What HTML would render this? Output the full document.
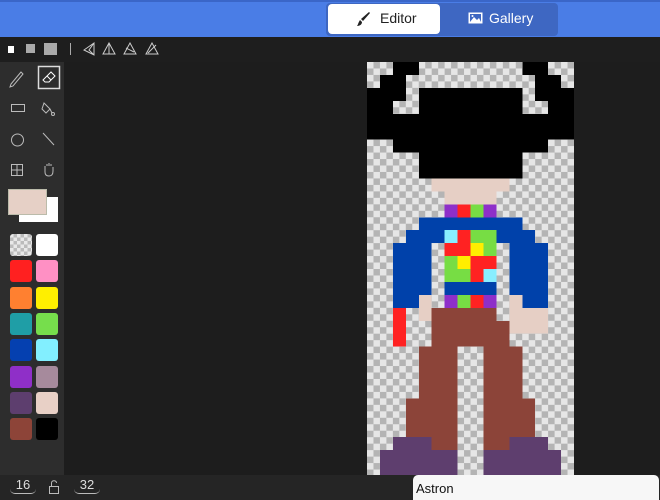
<!DOCTYPE html>
<html><head><meta charset="utf-8"><style>
*{margin:0;padding:0;box-sizing:border-box}
body{width:660px;height:500px;overflow:hidden;background:#1d1d1d;font-family:"Liberation Sans",sans-serif;position:relative}
.abs{position:absolute}
.sw{position:absolute;width:22px;height:22px;border-radius:3px}
</style></head><body>
<div class="abs" style="left:0;top:0;width:660px;height:37px;background:#4a7de6;border-top:2px solid #3a66c8"></div>
<div class="abs" style="left:326px;top:3px;width:232px;height:33px;background:#3e67c2;border-radius:4px"></div>
<div class="abs" style="left:328px;top:4px;width:112px;height:30px;background:#fff;border-radius:4px"></div>
<svg class="abs" style="left:355px;top:11px" width="16" height="16" viewBox="0 0 16 16"><path d="M14 1 L15 2 L8 10 L6 8 Z" fill="#222"/><path d="M5 9 L7 11 C7 14 4 15 2 15 C3 14 3 12 5 9Z" fill="#222"/></svg>
<div class="abs" style="left:380px;top:10px;font-size:14px;color:#222">Editor</div>
<svg class="abs" style="left:468px;top:12px" width="15" height="12" viewBox="0 0 15 12"><rect x="0.5" y="0.5" width="14" height="11" fill="#fff"/><rect x="2" y="2" width="11" height="8" fill="#3e67c2"/><path d="M2 10 L6 5 L9 8 L11 6 L13 10Z" fill="#fff"/><circle cx="4.5" cy="4" r="1" fill="#fff"/></svg>
<div class="abs" style="left:489px;top:10px;font-size:14px;color:#fff">Gallery</div>

<div class="abs" style="left:0;top:37px;width:660px;height:25px;background:#1e1e1e"></div>
<div class="abs" style="left:8px;top:46px;width:6px;height:7px;background:#fff"></div>
<div class="abs" style="left:26px;top:44px;width:9px;height:9px;background:#aaa"></div>
<div class="abs" style="left:44px;top:43px;width:13px;height:12px;background:#aaa"></div>
<div class="abs" style="left:70px;top:43px;width:1px;height:12px;background:#aaa"></div>
<svg class="abs" style="left:82px;top:42px" width="80" height="14" viewBox="0 0 80 14" fill="none" stroke="#ccc" stroke-width="1">
<path d="M12 1 L2 8 L12 13 Z M12 1 L7 8 L12 13"/>
<path d="M27 1 L21 12 L33 12 Z M27 1 V12"/>
<path d="M48 1 L42 12 L54 12 Z M44 6 L52 10"/>
<path d="M70 1 L64 12 L76 12 Z M74 3 L66 11"/>
</svg>

<div class="abs" style="left:0;top:62px;width:64px;height:413px;background:#2d2d2d"></div>
<svg class="abs" style="left:0;top:62px" width="64" height="120" viewBox="0 0 64 120" fill="none" stroke="#bbb" stroke-width="1">
<path d="M11 22 L21 10 L23 12 L13 24 L10 25 Z"/>
<rect x="38.5" y="4.5" width="21" height="22" stroke="#ddd" stroke-width="1.5"/>
<path d="M43 18 L51 10 L55 14 L49 20 L45 20 Z M47 14 L51 18" stroke="#fff"/>
<rect x="11.5" y="42.5" width="13" height="7"/>
<path d="M44 41 L50 47 L46 51 L42 47 Z M50 47 L52 51"/><circle cx="53" cy="52" r="1.5"/>
<circle cx="17.5" cy="78" r="6"/>
<path d="M43 71 L54 83"/>
<rect x="11.5" y="102.5" width="11" height="11"/><path d="M17 103 V113 M12 108 H22"/>
<path d="M45 104 V110 C45 113 47 114 49 114 C52 114 53 112 53 109 V105 M47 104 V102 M49 104 V101 M51 104 V102"/>
</svg>
<div class="abs" style="left:19px;top:197px;width:39px;height:25px;background:#fff"></div>
<div class="abs" style="left:8px;top:189px;width:39px;height:26px;background:#e6d0c6;border:1px solid #bba"></div>
<div class="sw" style="left:10px;top:234px;background:repeating-conic-gradient(#bbb 0 25%,#e8e8e8 0 50%) 0 0/7px 7px"></div>
<div class="sw" style="left:36px;top:234px;background:#fff"></div>
<div class="sw" style="left:10px;top:260px;background:#ff2020"></div>
<div class="sw" style="left:36px;top:260px;background:#ff90c4"></div>
<div class="sw" style="left:10px;top:287px;background:#ff8030"></div>
<div class="sw" style="left:36px;top:287px;background:#ffef00"></div>
<div class="sw" style="left:10px;top:313px;background:#1f9ea6"></div>
<div class="sw" style="left:36px;top:313px;background:#76de4c"></div>
<div class="sw" style="left:10px;top:339px;background:#0540b0"></div>
<div class="sw" style="left:36px;top:339px;background:#82efff"></div>
<div class="sw" style="left:10px;top:366px;background:#8f2fc8"></div>
<div class="sw" style="left:36px;top:366px;background:#a68a9c"></div>
<div class="sw" style="left:10px;top:392px;background:#5d3e6e"></div>
<div class="sw" style="left:36px;top:392px;background:#e8d0c6"></div>
<div class="sw" style="left:10px;top:418px;background:#8d4438"></div>
<div class="sw" style="left:36px;top:418px;background:#000"></div>

<svg class="abs" style="left:367px;top:62px" width="207" height="414" viewBox="0 0 16 32" shape-rendering="crispEdges">
<defs><pattern id="ck" width="1" height="1" patternUnits="userSpaceOnUse"><rect width="1" height="1" fill="#e6e6e6"/><rect x="0.5" width="0.5" height="0.5" fill="#b4b4b4"/><rect y="0.5" width="0.5" height="0.5" fill="#b4b4b4"/></pattern></defs>
<rect width="16" height="32" fill="url(#ck)"/>
<g fill="#000">
<rect x="2" y="0" width="2" height="1"/><rect x="12" y="0" width="2" height="1"/>
<rect x="1" y="1" width="2" height="1"/><rect x="13" y="1" width="2" height="1"/>
<rect x="0" y="2" width="3" height="1"/><rect x="4" y="2" width="8" height="1"/><rect x="13" y="2" width="3" height="1"/>
<rect x="0" y="3" width="2" height="1"/><rect x="4" y="3" width="8" height="1"/><rect x="14" y="3" width="2" height="1"/>
<rect x="0" y="4" width="16" height="2"/>
<rect x="2" y="6" width="12" height="1"/>
<rect x="4" y="7" width="8" height="2"/>
</g>
<g fill="#e6cfc5">
<rect x="5" y="9" width="6" height="1"/><rect x="6" y="10" width="4" height="1"/>
<rect x="4" y="18" width="1" height="2"/><rect x="11" y="18" width="1" height="1"/><rect x="11" y="19" width="3" height="2"/>
</g>
<g fill="#0041aa">
<rect x="4" y="12" width="8" height="1"/><rect x="3" y="13" width="10" height="1"/>
<rect x="2" y="14" width="3" height="4"/><rect x="11" y="14" width="3" height="4"/>
<rect x="6" y="17" width="4" height="1"/>
<rect x="2" y="18" width="2" height="1"/><rect x="12" y="18" width="2" height="1"/>
</g>
<g fill="#8e2fc9"><rect x="6" y="11" width="1" height="1"/><rect x="9" y="11" width="1" height="1"/><rect x="6" y="18" width="1" height="1"/><rect x="9" y="18" width="1" height="1"/></g>
<g fill="#ff2222"><rect x="7" y="11" width="1" height="1"/><rect x="7" y="13" width="1" height="1"/><rect x="6" y="14" width="2" height="1"/><rect x="8" y="15" width="2" height="1"/><rect x="8" y="16" width="1" height="1"/><rect x="8" y="18" width="1" height="1"/><rect x="2" y="19" width="1" height="3"/></g>
<g fill="#77dd44"><rect x="8" y="11" width="1" height="1"/><rect x="8" y="13" width="2" height="1"/><rect x="9" y="14" width="1" height="1"/><rect x="6" y="15" width="1" height="1"/><rect x="6" y="16" width="2" height="1"/><rect x="7" y="18" width="1" height="1"/></g>
<g fill="#88eeff"><rect x="6" y="13" width="1" height="1"/><rect x="9" y="16" width="1" height="1"/></g>
<g fill="#ffee00"><rect x="8" y="14" width="1" height="1"/><rect x="7" y="15" width="1" height="1"/></g>
<g fill="#8c4439">
<rect x="5" y="19" width="5" height="1"/><rect x="5" y="20" width="6" height="2"/>
<rect x="4" y="22" width="3" height="4"/><rect x="9" y="22" width="3" height="4"/>
<rect x="3" y="26" width="4" height="3"/><rect x="9" y="26" width="4" height="3"/>
<rect x="5" y="29" width="2" height="1"/><rect x="9" y="29" width="2" height="1"/>
</g>
<g fill="#5e3e6e">
<rect x="2" y="29" width="3" height="1"/><rect x="11" y="29" width="3" height="1"/>
<rect x="1" y="30" width="6" height="2"/><rect x="9" y="30" width="6" height="2"/>
</g>
</svg>

<div class="abs" style="left:0;top:475px;width:660px;height:25px;background:#252525"></div>
<div class="abs" style="left:10px;top:477px;width:26px;height:17px;border-bottom:1px solid #bbb;border-radius:0 0 5px 5px;color:#ddd;font-size:13px;text-align:center">16</div>
<svg class="abs" style="left:48px;top:479px" width="12" height="16" viewBox="0 0 12 16" fill="none" stroke="#bbb"><rect x="1.5" y="7.5" width="9" height="7"/><path d="M3.5 7.5 V4 C3.5 1 8.5 1 8.5 4"/></svg>
<div class="abs" style="left:74px;top:477px;width:26px;height:17px;border-bottom:1px solid #bbb;border-radius:0 0 5px 5px;color:#ddd;font-size:13px;text-align:center">32</div>
<div class="abs" style="left:413px;top:475px;width:246px;height:25px;background:#f7f7f7;border-radius:5px 5px 0 0;padding:6px 0 0 3px;font-size:13px;color:#111">Astron</div>
</body></html>
